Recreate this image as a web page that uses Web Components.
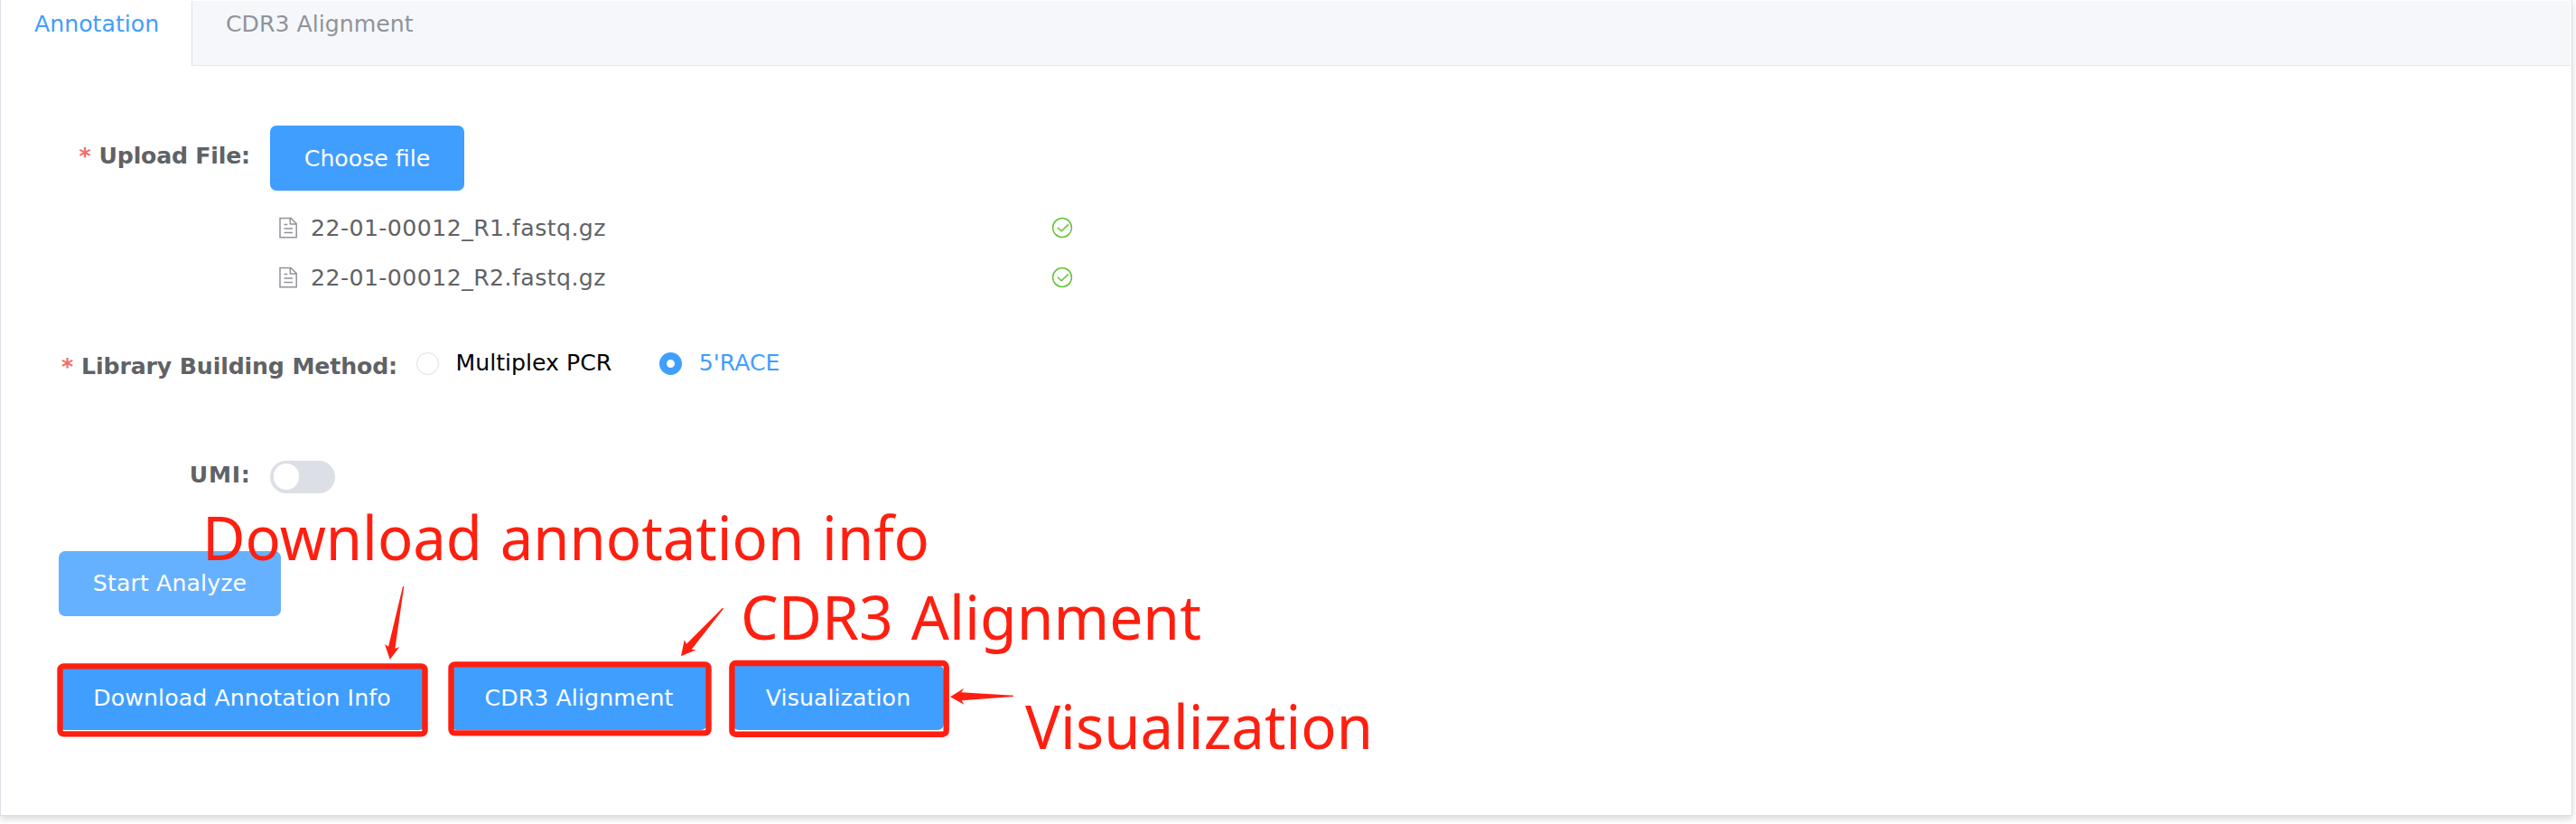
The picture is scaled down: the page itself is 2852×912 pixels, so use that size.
<!DOCTYPE html>
<html lang="en">
<head>
<meta charset="utf-8">
<title>Annotation</title>
<style>
html,body{margin:0;padding:0;height:912px;overflow:hidden;background:#fff}
body{font:25.2px/36px Verdana,"DejaVu Sans",sans-serif;color:#606266}
</style>
</head>
<body>
<annotation-page></annotation-page>
<script>
const define=(name,html)=>customElements.define(name,class extends HTMLElement{
  constructor(){super();this.attachShadow({mode:'open'}).innerHTML=html;}
});
define('tab-item',`<style>
:host{display:block;box-sizing:border-box;height:71px;padding:12px 36px 0 37px;line-height:28px;color:#909399;white-space:nowrap}
:host([active]){height:72px;background:#fff;color:#409eff;border-right:1px solid #dcdfe6}
</style><slot></slot>`);
define('ui-button',`<style>
:host{display:flex;box-sizing:border-box;height:72px;padding-top:2px;border-radius:7px;background:#409eff;color:#fff;align-items:center;justify-content:center;white-space:nowrap;flex:none}
:host([muted]){background:#66b1ff;padding-top:0;letter-spacing:.12px}
</style><slot></slot>`);
define('form-label',`<style>
:host{display:block;box-sizing:border-box;font-weight:700;text-align:right;white-space:nowrap;flex:none}
i{font-style:normal;letter-spacing:0;color:#f56c6c;margin-right:9px;display:none}
:host([required]) i{display:inline}
</style><i>*</i><slot></slot>`);
define('file-row',`<style>
:host{display:flex;align-items:center;height:55px;width:880px}
.n{flex:1;margin-left:14px;letter-spacing:.43px}
svg{display:block;flex:none;position:relative;top:-.8px}
</style>
<svg width="22" height="24" viewBox="0 0 22 24" fill="none" stroke="#909399" stroke-width="1.5"><path d="M2 1.5H14L20.2 7.5V22.8H2Z M13.3 1.5V7.9H20.2 M6.5 8.4H10.3 M6.5 13H16 M6.5 17.5H16"/></svg>
<span class="n"><slot></slot></span>
<svg width="24" height="24" viewBox="0 0 24 24" fill="none" stroke="#67c23a" stroke-width="1.5"><circle cx="12" cy="12" r="10.4"/><path d="M6.8 11.8L11.2 15.8L18.8 8.4"/></svg>`);
define('radio-option',`<style>
:host{display:flex;align-items:center;color:#000;height:36px;white-space:nowrap}
.c{box-sizing:border-box;width:25px;height:25px;border:1px solid #dcdfe6;border-radius:50%;margin-right:18.5px;flex:none}
:host([checked]){color:#409eff}
:host([checked]) .c{border:8.5px solid #409eff}
</style><span class="c"></span><span><slot></slot></span>`);
define('toggle-switch',`<style>
:host{display:block;box-sizing:border-box;width:72px;height:36px;padding:3.6px;border-radius:18px;background:#dcdfe6}
span{display:block;width:28.8px;height:28.8px;border-radius:50%;background:#fff}
</style><span></span>`);
define('callout-layer',`<style>
:host{display:block;position:absolute;left:0;top:0;width:2852px;height:912px;pointer-events:none}
svg{display:block}
text{font-family:"Segoe UI","Noto Sans","Open Sans",sans-serif;font-size:67.5px;word-spacing:3px}
</style>
<svg width="2852" height="912" fill="#ff1f10">
<g fill="none" stroke="#ff1f10" stroke-width="6.4">
<rect x="66.5" y="737.4" width="404" height="75" rx="4"/><rect x="499.5" y="735.4" width="285" height="76" rx="4"/><rect x="810.4" y="734" width="237.3" height="78.7" rx="4"/></g>
<text x="224" y="620" textLength="805" lengthAdjust="spacingAndGlyphs">Download annotation info</text>
<text x="820" y="708" textLength="510" lengthAdjust="spacingAndGlyphs">CDR3 Alignment</text>
<text x="1135" y="829" textLength="385" lengthAdjust="spacingAndGlyphs">Visualization</text>
<path d="M446 649H447.3L437.3 718L442.3 716L431.7 730L426 713L430 715.7Z"/>
<path d="M800 672.7L801 673.7L765.7 718.7L770.7 719.3L754 726.3L757.7 708.3L760 712.7Z"/>
<path d="M1122 769.7V771L1064.7 775.3L1067.3 779.7L1052 771.3L1067.3 761.7L1064.3 766.3Z"/>
</svg>`);
define('annotation-page',`<style>
:host{display:block;position:relative;width:2852px;height:912px}
.card{box-sizing:border-box;width:2848px;height:903px;border:1px solid #dcdfe6;border-top:0;background:#fff;display:flow-root;box-shadow:0 3.6px 7.2px rgba(0,0,0,.12),0 0 10.8px rgba(0,0,0,.04)}
.tabs{display:flex;box-sizing:border-box;height:71px;margin:1px 1px 0 0;background:#f5f7fa;box-shadow:0 1px #e4e7ed}
.row{display:flex}
.up{padding-top:67px}.up form-label{width:298px;padding:16px 22px 0 0;letter-spacing:-.2px}
.up ui-button{width:215px}
.files{padding:14px 0 0 307px}
.lib{padding-top:49px;height:36.5px}.lib form-label{width:460px;padding:4px 21px 0 0;letter-spacing:-.13px}
.lib radio-option{margin-right:53px}
.umi{padding-top:89px;height:37.5px}.umi form-label{width:298px;padding-right:21.5px;margin-top:-2px;letter-spacing:.7px}
.start{padding:63px 0 0 64px}.start ui-button{width:246px}
.acts{padding:54px 0 0 64px;gap:28px;letter-spacing:.1px}
</style>
<div class="card">
<div class="tabs"><tab-item active style="width:212px">Annotation</tab-item><tab-item>CDR3 Alignment</tab-item></div>
<div class="row up"><form-label required>Upload File:</form-label><ui-button>Choose file</ui-button></div>
<div class="files"><file-row>22-01-00012_R1.fastq.gz</file-row><file-row>22-01-00012_R2.fastq.gz</file-row></div>
<div class="row lib"><form-label required>Library Building Method:</form-label><radio-option>Multiplex PCR</radio-option><radio-option checked>5'RACE</radio-option></div>
<div class="row umi"><form-label>UMI:</form-label><toggle-switch></toggle-switch></div>
<div class="row start"><ui-button muted>Start Analyze</ui-button></div>
<div class="row acts"><ui-button style="width:406px">Download Annotation Info</ui-button><ui-button style="width:284px">CDR3 Alignment</ui-button><ui-button style="width:234px">Visualization</ui-button></div>
</div>
<callout-layer></callout-layer>`);
</script>
</body>
</html>
